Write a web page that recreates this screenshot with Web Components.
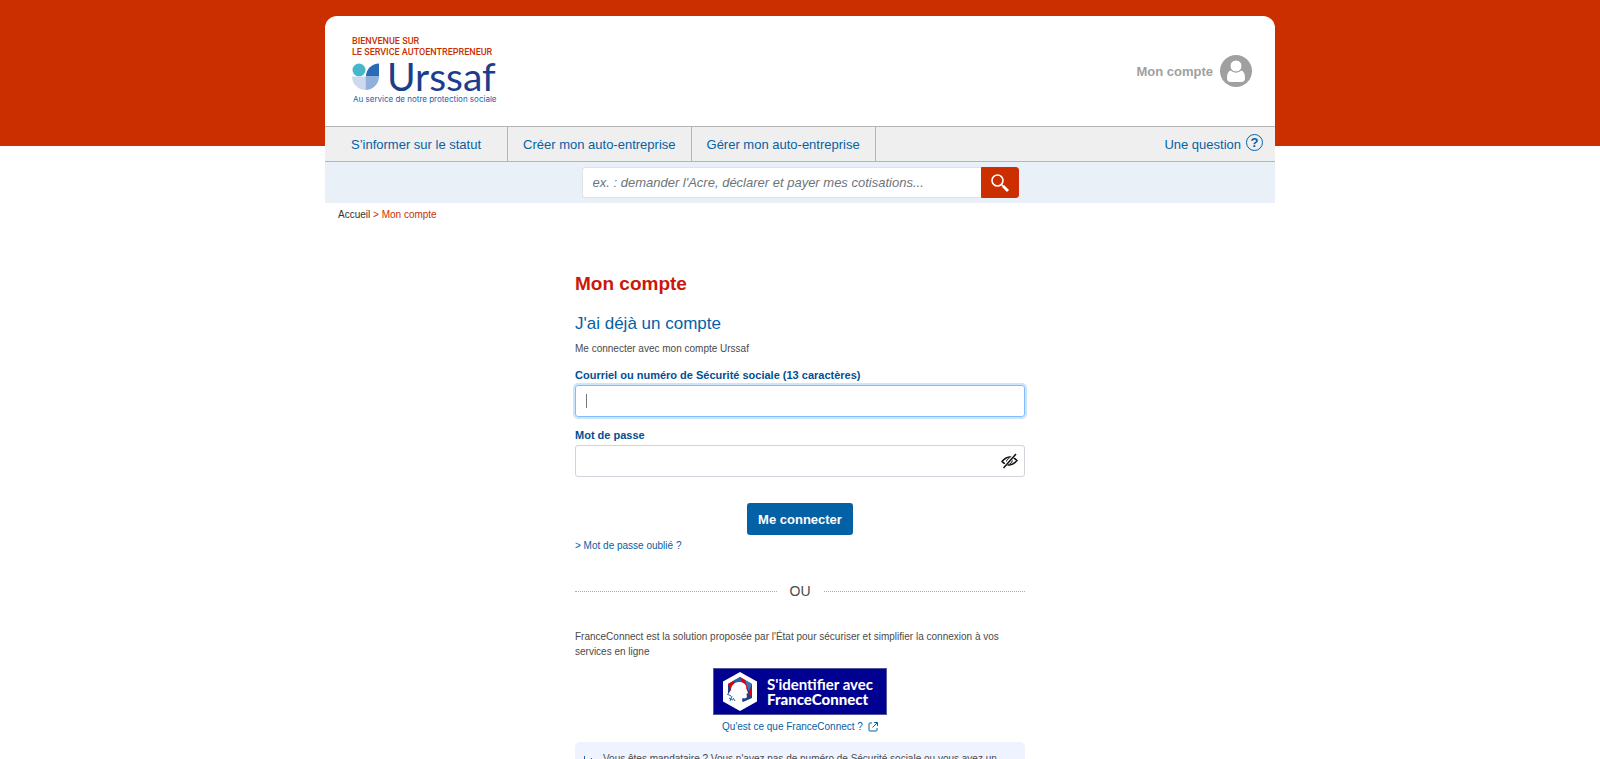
<!DOCTYPE html>
<html lang="fr">
<head>
<meta charset="utf-8">
<meta name="viewport" content="width=device-width, initial-scale=1">
<title>Mon compte - Autoentrepreneur Urssaf</title>
<style>
  :root {
    --red: #cb2f00;
    --title: #c9190b;
    --blue: #0561a6;
    --navy: #004f95;
    --line: #b5b5b5;
    --font-main: "Liberation Sans", Arial, sans-serif;
  }

  body {
    margin: 0;
    font-family: var(--font-main);
    font-size: 10px;
    color: #4a4a4a;
    background: #fff;
  }
</style>
</head>
<body>
<ae-page>
  <site-header slot="header"></site-header>
  <main-nav slot="header"></main-nav>
  <search-bar slot="header"></search-bar>
  <bread-crumb></bread-crumb>
  <login-form></login-form>
</ae-page>

<script>
class AePage extends HTMLElement {
  constructor() {
    super();
    this.attachShadow({ mode: "open" });
  }

  static get styles() {
    return /* css */`
      :host {
        display: block;
        background: linear-gradient(var(--red), var(--red)) top / 100% 146px no-repeat;
        padding-top: 16px;
      }

      .wrap {
        max-width: 950px;
        margin: 0 auto;
      }
    `;
  }

  connectedCallback() {
    this.shadowRoot.innerHTML = /* html */`
    <style>${AePage.styles}</style>
    <div class="wrap">
      <header><slot name="header"></slot></header>
      <main><slot></slot></main>
    </div>`;
  }
}

class UrssafLogo extends HTMLElement {
  constructor() {
    super();
    this.attachShadow({ mode: "open" });
  }

  static get styles() {
    return /* css */`
      :host {
        display: block;
        padding-bottom: 2px;
      }

      a {
        display: block;
        text-decoration: none;
        font-family: Roboto, sans-serif;
      }

      .welcome {
        display: block;
        font-size: 9px;
        font-weight: 500;
        line-height: 11px;
        color: var(--red);
      }

      .brand {
        display: flex;
        align-items: center;
        gap: 8px;
        height: 36px;
        font-family: Lato, sans-serif;
        font-size: 39px;
        line-height: 36px;
        color: #1b3e8a;
      }

      .baseline {
        display: block;
        padding-left: 1px;
        font-family: Inter, sans-serif;
        font-size: 8px;
        line-height: 10px;
        color: #1a62ad;
      }
    `;
  }

  connectedCallback() {
    this.shadowRoot.innerHTML = /* html */`
    <style>${UrssafLogo.styles}</style>
    <a href="#">
      <span class="welcome">BIENVENUE SUR<br>LE SERVICE AUTOENTREPRENEUR</span>
      <span class="brand">
        <svg width="27" height="27" viewBox="0 0 27 27" aria-hidden="true">
          <circle cx="7" cy="7" r="6.5" fill="#44b8c8"/>
          <path d="M14 13.500A13 13 0 0 1 27 .5V13.500Z" fill="#286cb5"/>
          <path d="M0 13.500H13.500V27A13.500 13.500 0 0 1 0 13.500Z" fill="#ced9f0"/>
          <path d="M13.500 13.500H27A13.500 13.500 0 0 1 13.500 27Z" fill="#91b1dc"/>
        </svg>
        <span>Urssaf</span>
      </span>
      <span class="baseline">Au service de notre protection sociale</span>
    </a>`;
  }
}

class SiteHeader extends HTMLElement {
  constructor() {
    super();
    this.attachShadow({ mode: "open" });
  }

  static get styles() {
    return /* css */`
      :host {
        display: flex;
        align-items: center;
        justify-content: space-between;
        height: 110px;
        padding: 0 23px 0 27px;
        box-sizing: border-box;
        background: #fff;
        border-radius: 12px 12px 0 0;
      }

      .account {
        display: flex;
        align-items: center;
        gap: 7px;
        font-size: 13px;
        font-weight: bold;
        color: #a0a0a0;
        text-decoration: none;
      }
    `;
  }

  connectedCallback() {
    this.shadowRoot.innerHTML = /* html */`
    <style>${SiteHeader.styles}</style>
    <urssaf-logo></urssaf-logo>
    <a class="account" href="#">
      Mon compte
      <svg width="32" height="32" viewBox="0 0 32 32" aria-hidden="true">
        <circle cx="16" cy="16" r="16" fill="#a0a0a0"/>
        <path d="M10.500 15.500C8 16.500 7 19 7 23.500C7 26 8.500 27 11 27H21C23.500 27 25 26 25 23.500C25 19 24 16.500 21.500 15.500Q16 19.500 10.500 15.500Z" fill="#fff"/>
        <circle cx="16" cy="11" r="6" fill="#fff" stroke="#a0a0a0"/>
      </svg>
    </a>`;
  }
}

class MainNav extends HTMLElement {
  constructor() {
    super();
    this.attachShadow({ mode: "open" });
  }

  static get styles() {
    return /* css */`
      :host {
        display: block;
        background: #efefef;
        border-top: 1px solid var(--line);
        border-bottom: 1px solid var(--line);
      }

      nav {
        display: flex;
        height: 34px;
        font-size: 13px;
      }

      a {
        display: flex;
        align-items: center;
        padding: 0 15px;
        border-right: 1px solid var(--line);
        color: var(--blue);
        text-decoration: none;
      }

      a:first-child {
        padding: 0 26px;
      }

      .question {
        margin-left: auto;
        padding: 0 12px;
        border: 0;
        gap: 5px;
      }

      .mark {
        width: 15px;
        height: 15px;
        margin-bottom: 4px;
        border: 1px solid var(--blue);
        border-radius: 50%;
        font-size: 13px;
        font-weight: bold;
        line-height: 16px;
        text-align: center;
      }
    `;
  }

  connectedCallback() {
    this.shadowRoot.innerHTML = /* html */`
    <style>${MainNav.styles}</style>
    <nav>
      <a href="#">S’informer sur le statut</a>
      <a href="#">Créer mon auto-entreprise</a>
      <a href="#">Gérer mon auto-entreprise</a>
      <a class="question" href="#">Une question <span class="mark">?</span></a>
    </nav>`;
  }
}

class SearchBar extends HTMLElement {
  constructor() {
    super();
    this.attachShadow({ mode: "open" });
  }

  static get styles() {
    return /* css */`
      :host {
        display: block;
        padding: 5px 0;
        background: #e9f0f8;
      }

      form {
        display: flex;
        width: 46%;
        height: 31px;
        margin: 0 auto;
      }

      input {
        flex: 1;
        min-width: 0;
        padding: 0 10px;
        border: 1px solid #dfe3e8;
        border-right: 0;
        border-radius: 3px 0 0 3px;
        font: italic 13px var(--font-main);
        color: #6c757d;
        background: #fff;
      }

      input::placeholder {
        color: #6c757d;
      }

      button {
        display: grid;
        place-items: center;
        width: 38px;
        padding: 0;
        border: 1px solid #d62a12;
        border-radius: 0 3px 3px 0;
        background: var(--red);
      }
    `;
  }

  connectedCallback() {
    this.shadowRoot.innerHTML = /* html */`
    <style>${SearchBar.styles}</style>
    <form role="search">
      <input type="text" aria-label="Rechercher" placeholder="ex. : demander l'Acre, déclarer et payer mes cotisations...">
      <button type="submit" aria-label="Lancer la recherche">
        <svg width="20" height="20" viewBox="0 0 20 20" fill="none" stroke="#fff" aria-hidden="true">
          <circle cx="7.500" cy="7.500" r="5.500" stroke-width="1.600"/>
          <path d="M11.500 11.500L13.500 13.500" stroke-width="1.600"/>
          <path d="M13 13L18 18" stroke-width="2.800"/>
        </svg>
      </button>
    </form>`;
  }
}

class BreadCrumb extends HTMLElement {
  constructor() {
    super();
    this.attachShadow({ mode: "open" });
  }

  static get styles() {
    return /* css */`
      :host {
        display: block;
        padding: 5px 13px;
        line-height: 14px;
        color: var(--red);
      }

      a {
        color: #333;
        text-decoration: none;
      }
    `;
  }

  connectedCallback() {
    this.shadowRoot.innerHTML = /* html */`
    <style>${BreadCrumb.styles}</style>
    <nav aria-label="Fil d'Ariane"><a href="#">Accueil</a> &gt; Mon compte</nav>`;
  }
}

class FormField extends HTMLElement {
  constructor() {
    super();
    this.attachShadow({ mode: "open" });
  }

  static get styles() {
    return /* css */`
      :host {
        display: block;
      }

      label {
        display: block;
        margin-bottom: 2px;
        font-size: 11px;
        font-weight: bold;
        line-height: 16px;
        color: var(--navy);
      }

      .box {
        display: flex;
        align-items: center;
        height: 32px;
        box-sizing: border-box;
        border: 1px solid #ced4da;
        border-radius: 3px;
      }

      :host([active]) .box {
        border-color: #80bdff;
        box-shadow: 0 0 0 2px #cce5ff;
      }

      input {
        flex: 1;
        min-width: 0;
        height: 100%;
        padding: 0 10px;
        box-sizing: border-box;
        border: 0;
        outline: 0;
        background: none;
        font: 14px var(--font-main);
        caret-color: #495057;
      }

      :host([active]) input {
        caret-color: transparent;
        background: linear-gradient(#777, #777) 10px center / 1px 14px no-repeat;
      }
    `;
  }

  connectedCallback() {
    const type = this.getAttribute("type") || "text";
    this.shadowRoot.innerHTML = /* html */`
    <style>${FormField.styles}</style>
    <label for="field">${this.getAttribute("label")}</label>
    <div class="box">
      <input id="field" type="${type}">
      <slot></slot>
    </div>`;
  }
}

class FranceConnect extends HTMLElement {
  constructor() {
    super();
    this.attachShadow({ mode: "open" });
  }

  static get styles() {
    return /* css */`
      :host {
        display: block;
      }

      p {
        margin: 0 0 9px;
        line-height: 15px;
      }

      button {
        display: flex;
        align-items: center;
        gap: 10px;
        min-width: 174px;
        height: 47px;
        margin: 0 auto;
        padding: 0 9px;
        border: 1px solid #55559c;
        background: #000091;
        color: #fff;
        font: bold 15px/15px Lato, sans-serif;
        text-align: left;
      }

      b {
        display: block;
      }

      .more {
        display: flex;
        align-items: center;
        justify-content: center;
        gap: 5px;
        margin-top: 6px;
        line-height: 12px;
        color: var(--blue);
        text-decoration: none;
      }
    `;
  }

  connectedCallback() {
    this.shadowRoot.innerHTML = /* html */`
    <style>${FranceConnect.styles}</style>
    <p>FranceConnect est la solution proposée par l'État pour sécuriser et simplifier la connexion à vos services en ligne</p>
    <button type="button">
      <svg width="34" height="39" viewBox="0 0 34 39" aria-hidden="true">
        <path d="M17 0L34 9.500V29.500L17 39L0 29.500V9.500Z" fill="#fff"/>
        <path d="M17 5L5 12V23L12 30H20L29 26V12Z" fill="#1c3f86"/>
        <path d="M5 12L11 8.500L12 13L8 18Z" fill="#e1000f"/>
        <path d="M11 8.500L17 5L20 11L12 13Z" fill="#2a5fac"/>
        <path d="M17 5L22 8L20 12Z" fill="#e1000f"/>
        <path d="M22 8L29 12L26 19L21 12Z" fill="#3a76bd"/>
        <path d="M22 8L25 17L23 17L19 11Z" fill="#e1000f"/>
        <path d="M29 14V24L25 22Z" fill="#e1000f"/>
        <path d="M8 18C8 13 12 10 16 10C17 9.500 22 10.500 23 14C23.500 16 23 17 24 18L25 21L23.500 22L24 25C22 27.500 20 25.500 19 27L20 32H10L4 24Z" fill="#fff"/>
        <path d="M4 22L8 24M6 26L10 28M9 24L7 29M10 26L12 29" stroke="#2a5fac" fill="none"/>
      </svg>
      <span>S'identifier avec <b>FranceConnect</b></span>
    </button>
    <a class="more" href="#">
      Qu'est ce que FranceConnect ?
      <svg width="10" height="10" viewBox="0 0 10 10" fill="none" stroke="currentColor" aria-hidden="true">
        <path d="M4 1H2Q1 1 1 2V8Q1 9 2 9H8Q9 9 9 8V6M6 .5H9.500V4M9.500 .5L4.500 5.500"/>
      </svg>
    </a>`;
  }
}

class InfoNote extends HTMLElement {
  constructor() {
    super();
    this.attachShadow({ mode: "open" });
  }

  static get styles() {
    return /* css */`
      :host {
        display: flex;
        gap: 9px;
        padding: 9px;
        border-radius: 5px;
        background: #eef3ff;
        line-height: 15px;
      }

      svg {
        flex: none;
        margin-top: 5px;
      }
    `;
  }

  connectedCallback() {
    this.shadowRoot.innerHTML = /* html */`
    <style>${InfoNote.styles}</style>
    <svg width="10" height="10" viewBox="0 0 10 10" fill="none" stroke="#2b5fb0" aria-hidden="true">
      <path d="M.5 0V6H9M7 2L9 4"/>
    </svg>
    <span><slot></slot></span>`;
  }
}

class LoginForm extends HTMLElement {
  constructor() {
    super();
    this.attachShadow({ mode: "open" });
  }

  static get styles() {
    return /* css */`
      :host {
        display: block;
        max-width: 450px;
        margin: 0 auto;
        padding-top: 45px;
      }

      h1 {
        margin: 0 0 18px;
        font-size: 19px;
        line-height: 24px;
        color: var(--title);
      }

      h2 {
        margin: 0 0 7px;
        font-size: 17px;
        font-weight: normal;
        line-height: 20px;
        color: var(--blue);
      }

      p {
        margin: 0 0 10px;
        line-height: 16px;
      }

      form-field + form-field {
        margin-top: 10px;
      }

      .eye {
        display: grid;
        padding: 0;
        margin-right: 6px;
        border: 0;
        background: none;
      }

      .submit {
        display: block;
        height: 32px;
        margin: 26px auto 3px;
        padding: 0 11px;
        border: 0;
        border-radius: 3px;
        background: var(--blue);
        color: #fff;
        font: bold 13px var(--font-main);
      }

      .forgot {
        display: block;
        line-height: 16px;
        color: var(--blue);
        text-decoration: none;
      }

      .or {
        display: flex;
        align-items: center;
        gap: 13px;
        margin: 27px 0 28px;
        font-size: 14px;
        line-height: 20px;
      }

      .or::before,
      .or::after {
        content: "";
        flex: 1;
        border-top: 1px dotted #aaa;
      }

      info-note {
        margin-top: 9px;
      }
    `;
  }

  connectedCallback() {
    this.shadowRoot.innerHTML = /* html */`
    <style>${LoginForm.styles}</style>
    <h1>Mon compte</h1>
    <h2>J'ai déjà un compte</h2>
    <p>Me connecter avec mon compte Urssaf</p>
    <form>
      <form-field active label="Courriel ou numéro de Sécurité sociale (13 caractères)"></form-field>
      <form-field type="password" label="Mot de passe">
        <button class="eye" type="button" aria-label="Afficher le mot de passe">
          <svg width="17" height="16" viewBox="0 0 17 16" fill="none" stroke="#111" aria-hidden="true">
            <path d="M1 8.500Q8.500 0 16 7.500Q8.500 16 1 8.500Z" stroke-width="1.500"/>
            <path d="M6 9.500Q5 6 8.500 5.500M11 7Q12 10 8.500 11"/>
            <path d="M2 15L14.500 1" stroke="#fff" stroke-width="3"/>
            <path d="M2.500 15L15 1" stroke-width="1.500"/>
          </svg>
        </button>
      </form-field>
      <button class="submit" type="submit">Me connecter</button>
    </form>
    <a class="forgot" href="#">&gt; Mot de passe oublié ?</a>
    <div class="or">OU</div>
    <france-connect></france-connect>
    <info-note>Vous êtes mandataire ? Vous n'avez pas de numéro de Sécurité sociale ou vous avez un</info-note>`;
  }
}

customElements.define("urssaf-logo", UrssafLogo);
customElements.define("site-header", SiteHeader);
customElements.define("main-nav", MainNav);
customElements.define("search-bar", SearchBar);
customElements.define("bread-crumb", BreadCrumb);
customElements.define("form-field", FormField);
customElements.define("france-connect", FranceConnect);
customElements.define("info-note", InfoNote);
customElements.define("login-form", LoginForm);
customElements.define("ae-page", AePage);
</script>
</body>
</html>
